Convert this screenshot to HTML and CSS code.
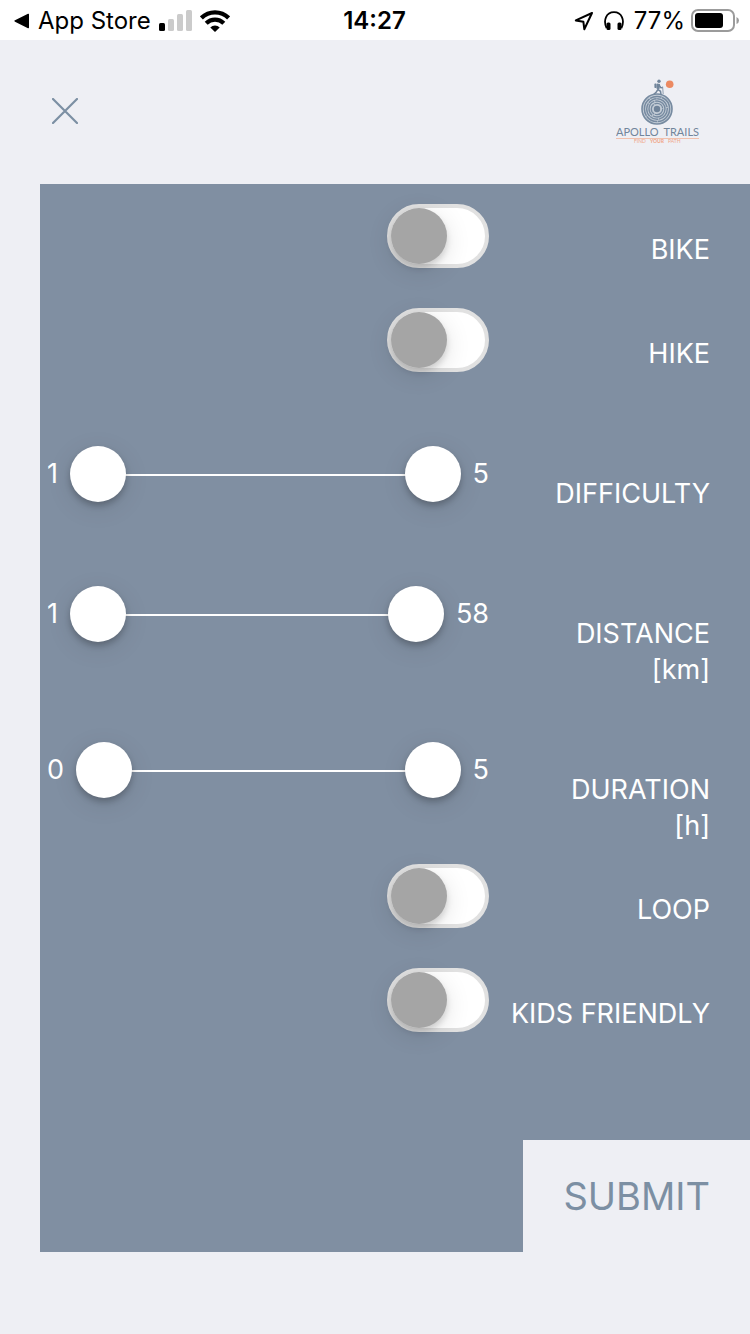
FILE: index.html
```html
<!DOCTYPE html>
<html lang="en">
<head>
<meta charset="utf-8">
<meta name="viewport" content="width=device-width, initial-scale=1">
<title>Apollo Trails</title>
<link rel="stylesheet" href="styles.css">
</head>
<body>
<div class="status">
  <div class="status-left">
    <svg width="16" height="16" viewBox="0 0 16 16" aria-hidden="true"><path d="M1 7.3 14 .8q1-.4 1 .6v13.2q0 1-1 .6L1 8.7q-1.3-.7 0-1.4z"/></svg>
    <span class="status-app">App Store</span>
    <svg width="33" height="22" viewBox="0 0 33 22" aria-hidden="true"><rect y="13" width="6" height="8" rx="1.5"/><g fill="#cbcbcb"><rect x="9" y="9" width="6" height="12" rx="1.5"/><rect x="18" y="4" width="6" height="17" rx="1.5"/><rect x="27" y="0" width="6" height="21" rx="1.5"/></g></svg>
    <svg width="30" height="22" viewBox="0 0 30 22" aria-hidden="true"><g fill="none" stroke="#000" stroke-width="4.2"><path d="M1.4 7.9a19.3 19.3 0 0 1 27.2 0"/><path d="M6.2 13.2a12.5 12.5 0 0 1 17.6 0"/></g><path d="M10.3 17.500a6.7 6.7 0 0 1 9.4 0L15 22z"/></svg>
  </div>
  <div class="status-time">14:27</div>
  <div class="status-right">
    <svg width="20" height="20" viewBox="0 0 20 20" aria-hidden="true"><path d="M18 2 1.8 9.4l7.6 1.4.9 7.4z" fill="none" stroke="#000" stroke-width="2" stroke-linejoin="round"/></svg>
    <svg class="phones" width="20" height="20" viewBox="0 0 20 20" aria-hidden="true"><path d="M2.600 17C-1 9.500 2 1.200 10 1.200S21 9.500 17.400 17" fill="none" stroke="#000" stroke-width="1.800"/><rect x="2.500" y="11.500" width="4" height="7.500" rx="1.500"/><rect x="13.500" y="11.500" width="4" height="7.500" rx="1.500"/></svg>
    <span>77%</span>
    <svg width="48" height="24" viewBox="0 0 48 24" aria-hidden="true"><rect x="1" y="1" width="42" height="21" rx="6" fill="none" stroke="#9b9b9b" stroke-width="2"/><rect x="4" y="4" width="28" height="15" rx="3"/><path d="M45.500 8q2.500 1 2.500 3.500T45.500 15z" fill="#9b9b9b"/></svg>
  </div>
</div>

<header class="header">
  <button class="close" type="button" aria-label="Close"><svg width="26" height="26" viewBox="0 0 26 26"><path d="M1 1l24 24M25 1 1 25" stroke="#7c8fa3" stroke-width="2.200" stroke-linecap="round"/></svg></button>
  <svg class="logo" width="84" height="66" viewBox="0 0 84 66" role="img" aria-label="Apollo Trails, find your path">
    <circle cx="41" cy="30" r="15" fill="#c3ccd6"/>
    <g fill="none" stroke="#768aa0">
      <circle cx="41" cy="30" r="15" stroke-width="1.600"/>
      <circle cx="41" cy="30" r="12.600" stroke-width="1.500" stroke-dasharray="19 .6 12 .5"/>
      <circle cx="41" cy="30" r="10.300" stroke-width="1.400" stroke-dasharray="14 .7 9 .5"/>
      <circle cx="41" cy="30" r="8" stroke-width="1.400" stroke-dasharray="17 .8"/>
      <circle cx="41" cy="30" r="5.700" stroke-width="1.300" stroke-dasharray="11 .7"/>
      <circle cx="41" cy="30" r="3.200" fill="#6f8399" stroke="none"/>
      <path d="M42 6.500 42 10.500 44.500 12.300 45 15.500M42 10.300 40.300 13 38 15.300M43 6l1.600 2.500 2 .3" stroke="#71859b" stroke-width="1.500"/>
      <path d="M46.600 7.500 47.200 15" stroke-width=".8"/>
    </g>
    <g fill="#71859b"><circle cx="43" cy="2.300" r="1.700"/><path d="M41 4.500l3 .5-.5 5-3-.2z"/><rect x="38.400" y="4.600" width="2.300" height="4.400" rx=".8"/></g>
    <circle cx="53.700" cy="5.200" r="3.800" fill="#ec8a62"/>
    <g class="logo-name"><text x="0" y="57">APOLLO</text><text x="83" y="57" text-anchor="end">TRAILS</text></g>
    <path d="M0 59.500H83" stroke="#f0b49b" stroke-width=".8"/>
    <g class="logo-tag"><text x="18" y="64">FIND</text><text x="34" y="64" font-weight="700">YOUR</text><text x="52" y="64">PATH</text></g>
  </svg>
</header>

<main class="main">
<form class="filters">
  <div class="row"><input class="toggle" type="checkbox" id="bike"><label class="label" for="bike">BIKE</label></div>
  <div class="row"><input class="toggle" type="checkbox" id="hike"><label class="label" for="hike">HIKE</label></div>

  <div class="row row-range" role="group" aria-labelledby="difficulty">
    <div class="slider"><output>1</output><div class="range"><input type="range" min="1" max="5" value="1" aria-label="Minimum difficulty"><input type="range" min="1" max="5" value="5" aria-label="Maximum difficulty"></div><output>5</output></div>
    <div class="label" id="difficulty">DIFFICULTY</div>
  </div>
  <div class="row row-range" role="group" aria-labelledby="distance">
    <div class="slider"><output>1</output><div class="range"><input type="range" min="1" max="58" value="1" aria-label="Minimum distance"><input type="range" min="1" max="58" value="58" aria-label="Maximum distance"></div><output>58</output></div>
    <div class="label" id="distance">DISTANCE<br>[km]</div>
  </div>
  <div class="row row-range" role="group" aria-labelledby="duration">
    <div class="slider"><output>0</output><div class="range"><input type="range" min="0" max="5" value="0" aria-label="Minimum duration"><input type="range" min="0" max="5" value="5" aria-label="Maximum duration"></div><output>5</output></div>
    <div class="label" id="duration">DURATION<br>[h]</div>
  </div>

  <div class="row"><input class="toggle" type="checkbox" id="loop"><label class="label" for="loop">LOOP</label></div>
  <div class="row"><input class="toggle" type="checkbox" id="kids"><label class="label" for="kids">KIDS FRIENDLY</label></div>
  <button class="submit" type="submit">SUBMIT</button>
</form>
</main>
</body>
</html>
```
FILE: styles.css
```css
* { box-sizing: border-box; }

body {
  margin: 0;
  min-height: 100vh;
  display: flex;
  flex-direction: column;
  background: #eeeff4;
  color: #fff;
  font-family: Inter, "Liberation Sans", sans-serif;
  font-size: 27px;
  line-height: 36px;
}

svg { display: block; flex: none; }

.status {
  display: grid;
  grid-template-columns: 1fr auto 1fr;
  align-items: center;
  height: 40px;
  padding: 1px 11px 0 14px;
  background: #fff;
  color: #000;
  font-size: 24px;
}

.status-left,
.status-right {
  display: flex;
  align-items: center;
  gap: 8px;
}

.status-right {
  justify-content: flex-end;
  gap: 6px;
}

.status-time {
  padding-right: 4px;
  font-weight: 600;
}

.phones { margin: 0 4px; }

.header {
  display: flex;
  justify-content: space-between;
  align-items: center;
  height: 144px;
  padding: 0 50px 2px 40px;
}

.close {
  display: grid;
  place-items: center;
  width: 50px;
  height: 50px;
  padding: 0;
  border: 0;
  background: none;
}

.logo { margin-top: 2px; }

.logo-name {
  fill: #71859b;
  font-family: Lato, sans-serif;
  font-size: 11px;
}

.logo-tag {
  fill: #f0a587;
  font-family: Lato, sans-serif;
  font-size: 5px;
}

.main {
  flex: 1;
  display: flex;
  padding: 0 0 82px 40px;
}

.filters {
  flex: 1;
  display: flex;
  flex-direction: column;
  padding-top: 20px;
  background: #808fa2;
}

.row {
  display: grid;
  grid-template-columns: 2fr 1fr;
  align-items: end;
  padding: 0 40px 40px 7px;
}

.row-range {
  align-items: start;
  min-height: 140px;
  padding-bottom: 20px;
}

.label {
  text-align: right;
  white-space: nowrap;
}

.row-range .label { padding-top: 64px; }

.toggle {
  appearance: none;
  justify-self: end;
  width: 102px;
  height: 64px;
  margin: 0;
  border: 4px solid #e1e1e1;
  border-radius: 32px;
  background: #fff;
}

.toggle::before {
  content: "";
  display: block;
  width: 56px;
  height: 56px;
  border-radius: 50%;
  background: #a5a5a5;
  box-shadow: 0 6px 26px rgba(0, 0, 0, .12), 0 4px 6px rgba(0, 0, 0, .14);
}

.toggle:checked::before { margin-left: auto; }

.slider {
  display: flex;
  align-items: center;
  gap: 12px;
  padding-top: 34px;
}

.range {
  flex: 1;
  display: grid;
  align-items: center;
  height: 56px;
  background: linear-gradient(#fff, #fff) center 28px / calc(100% - 56px) 2px no-repeat;
}

.range input {
  grid-area: 1 / 1;
  appearance: none;
  width: 100%;
  height: 56px;
  margin: 0;
  background: none;
  pointer-events: none;
}

.range input::-webkit-slider-thumb {
  appearance: none;
  width: 56px;
  height: 56px;
  border-radius: 50%;
  background: #fff;
  box-shadow: 0 6px 26px rgba(0, 0, 0, .1), 0 4px 6px rgba(0, 0, 0, .22);
  pointer-events: auto;
}

.submit {
  align-self: flex-end;
  margin-top: auto;
  padding: 32px 40px;
  border: 0;
  background: #eeeff4;
  color: #7c8fa3;
  font-family: inherit;
  font-size: 38px;
  line-height: 48px;
}
```
